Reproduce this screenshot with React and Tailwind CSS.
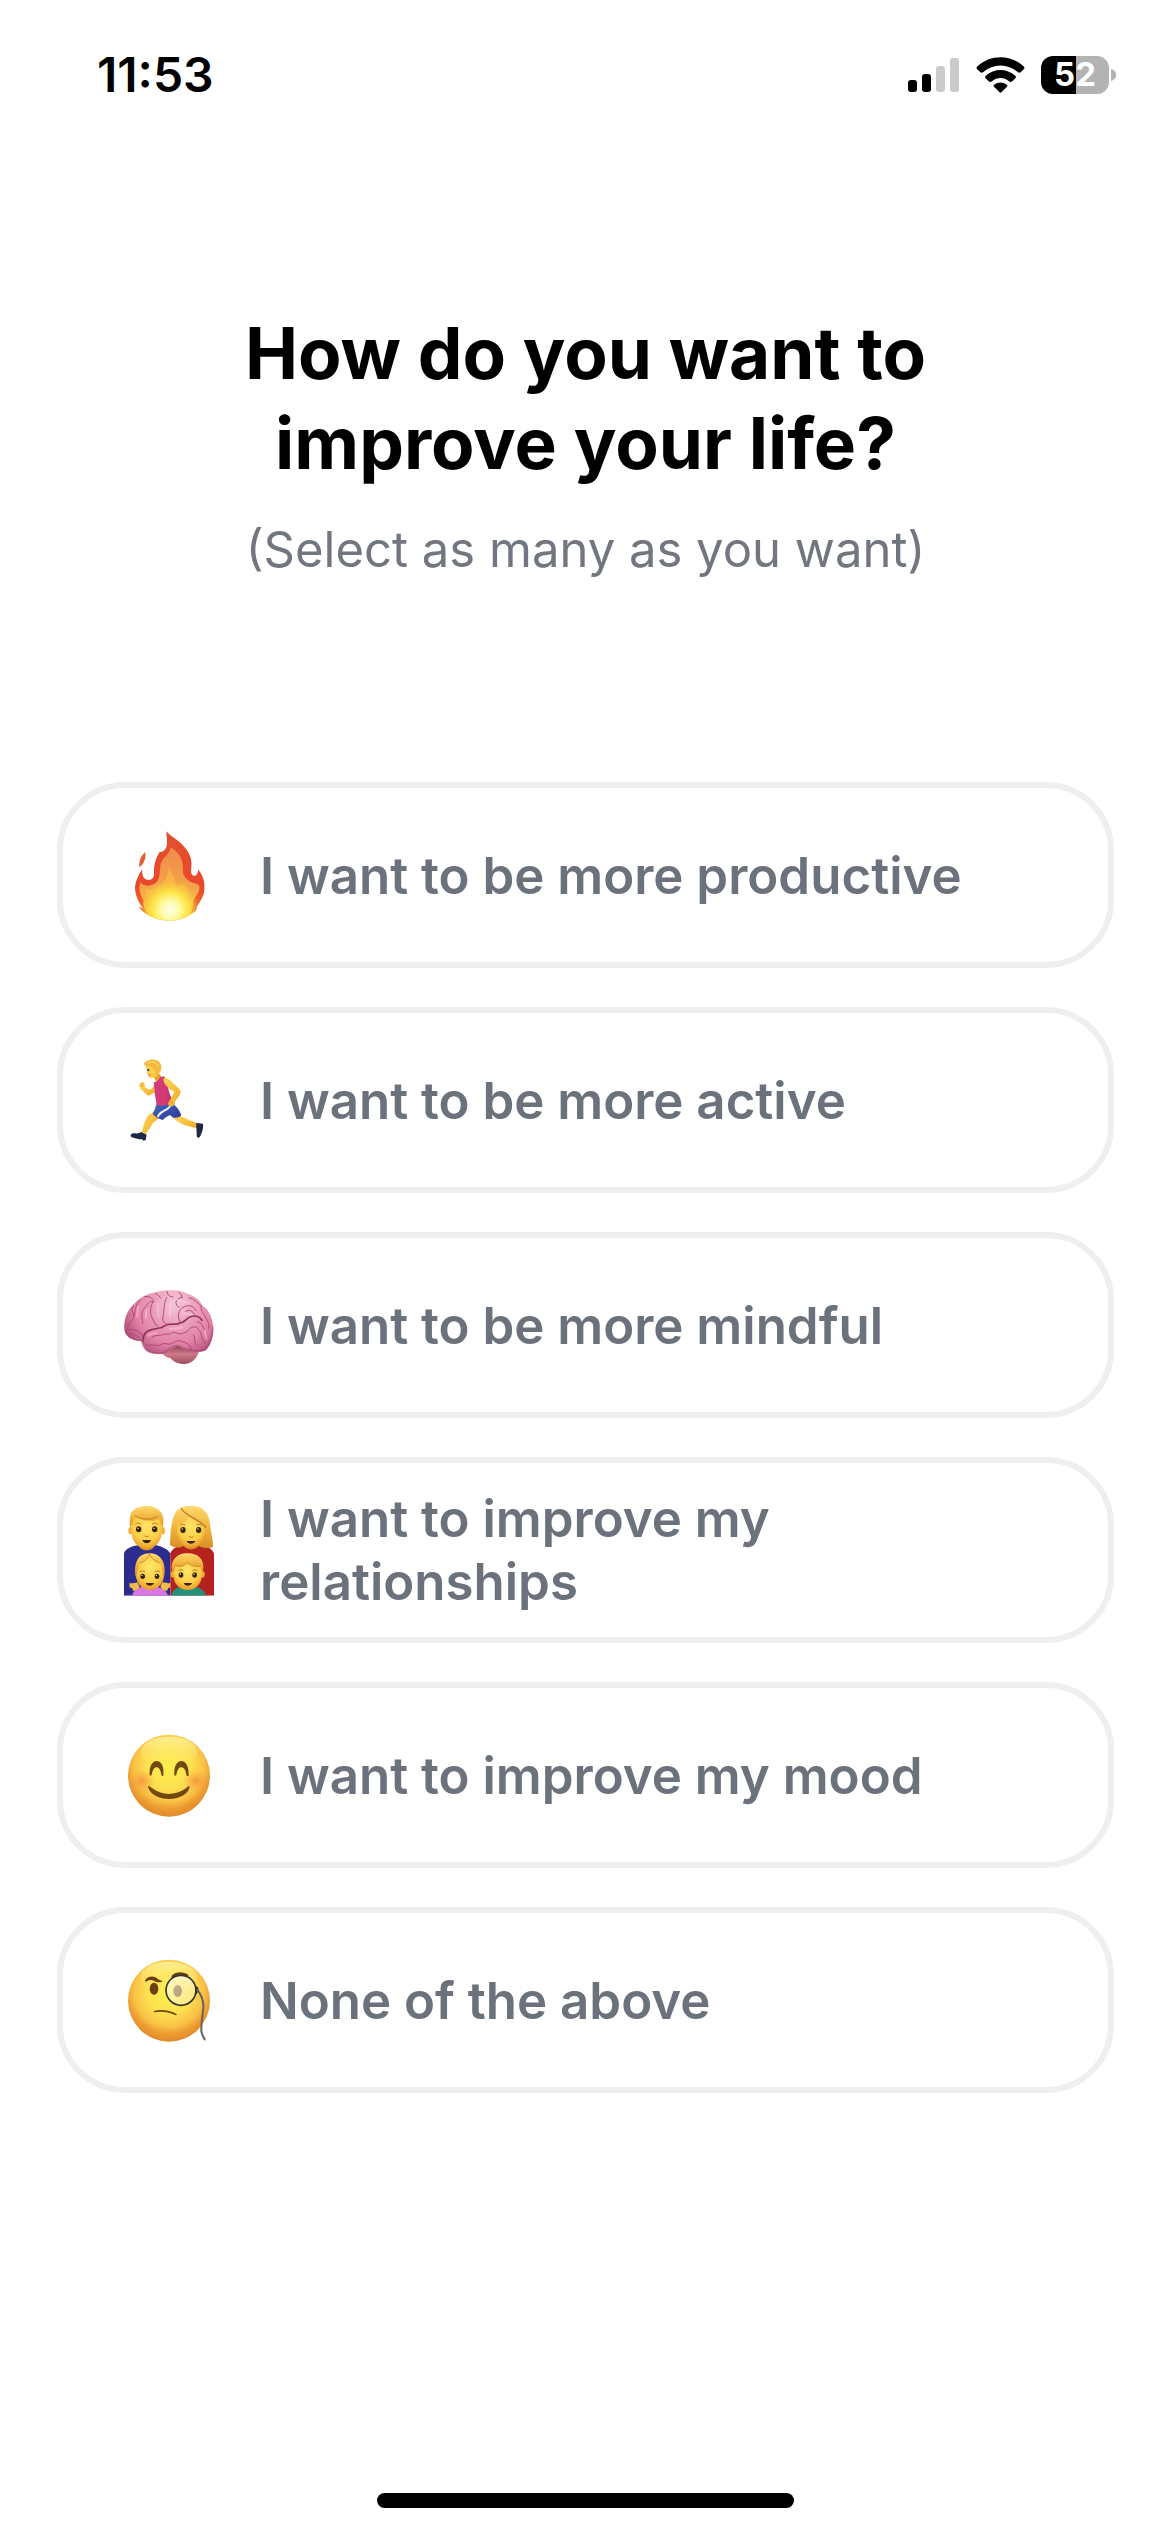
import React, { useState } from 'react';

const EMOJI_BOX = '42 42 276 276';

function FireIcon() {
  return (
    <svg viewBox={EMOJI_BOX} className="size-23 shrink-0" aria-hidden="true">
      <defs>
        <linearGradient id="fire-outer" x1="0" y1="0" x2="0" y2="1">
          <stop offset="0" stopColor="#e2502f" />
          <stop offset="0.6" stopColor="#e9492a" />
          <stop offset="0.85" stopColor="#ee6a2a" />
          <stop offset="1" stopColor="#f6a83a" />
        </linearGradient>
        <linearGradient id="fire-inner" x1="0" y1="0" x2="0" y2="1">
          <stop offset="0" stopColor="#f08a4c" />
          <stop offset="0.5" stopColor="#f3a24a" />
          <stop offset="1" stopColor="#f8cf3c" />
        </linearGradient>
        <radialGradient id="fire-core" gradientUnits="userSpaceOnUse" cx="180" cy="284" r="90">
          <stop offset="0" stopColor="#fffef0" />
          <stop offset="0.3" stopColor="#fffba8" />
          <stop offset="0.6" stopColor="#fdea48" stopOpacity="0.9" />
          <stop offset="1" stopColor="#f8c83c" stopOpacity="0" />
        </radialGradient>
        <clipPath id="fire-clip">
          <path d="M169 49C184 66 207 76 224 97C247 124 246 145 243 168C243 179 249 184 256 182C264 178 264 170 264 163C278 180 284 199 284 218C283 243 271 259 258 278L262 277L257 287C239 303 211 317 178 317C147 317 115 304 98 289L86 276L99 280C86 263 75 242 75 217C77 195 86 180 97 162C95 183 102 194 115 195C130 195 133 184 132 168C132 149 138 126 149 111C166 112 172 96 171 79C171 68 169 60 169 49Z" />
        </clipPath>
      </defs>
      <path d="M106 111C95 120 86 135 88 157C98 149 109 135 106 111Z" fill="#e85a35" />
      <g clipPath="url(#fire-clip)">
        <rect x="70" y="45" width="220" height="275" fill="url(#fire-outer)" />
        <path
          d="M182 97C201 107 219 130 219 157C216 178 226 190 237 198C250 207 262 203 268 213C271 238 249 247 250 261C253 274 242 285 236 317L124 317C112 292 96 275 101 257C91 239 84 218 92 202C97 211 112 216 130 208C151 199 149 176 151 152C154 129 178 122 182 97Z"
          fill="url(#fire-inner)"
        />
        <path
          d="M177 157C188 177 197 196 197 213C207 216 216 209 224 204C224 222 243 231 240 251C242 274 223 297 215 317L141 317C133 300 106 280 112 255C107 237 107 226 110 218C122 234 141 220 154 207C169 194 175 176 177 157Z"
          fill="#fbc23f"
          opacity="0.6"
        />
        <circle cx="180" cy="284" r="90" fill="url(#fire-core)" />
      </g>
    </svg>
  );
}

function RunnerIcon() {
  return (
    <svg viewBox={EMOJI_BOX} className="size-23 shrink-0" aria-hidden="true">
      <defs>
        <linearGradient id="run-skin" x1="0" y1="0" x2="1" y2="1">
          <stop offset="0" stopColor="#ffd95a" />
          <stop offset="1" stopColor="#f0a726" />
        </linearGradient>
        <linearGradient id="run-shirt" x1="0" y1="0" x2="1" y2="0">
          <stop offset="0" stopColor="#cf3d7d" />
          <stop offset="0.6" stopColor="#d23a73" />
          <stop offset="1" stopColor="#b92d63" />
        </linearGradient>
        <linearGradient id="run-shorts" x1="0" y1="0" x2="1" y2="1">
          <stop offset="0" stopColor="#4169b8" />
          <stop offset="1" stopColor="#2f3596" />
        </linearGradient>
      </defs>
      {/* legs */}
      <path d="M193 228C207 226 216 230 230 236C246 244 258 248 267 250L263 264C244 263 216 256 193 238Z" fill="url(#run-skin)" />
      <path d="M131 217L149 233C140 241 133 245 128 250C122 262 114 272 107 283L95 278C99 262 104 243 111 231C116 224 122 219 131 217Z" fill="url(#run-skin)" />
      <path d="M259 249L279 251C281 262 276 281 269 291C264 296 259 292 260 283C261 270 257 262 259 249Z" fill="#1e2947" />
      <path d="M93 276L110 284L107 300L101 302L96 298C85 298 71 294 63 290C60 284 64 280 73 280C82 281 88 280 93 276Z" fill="#1e2947" />
      {/* left arm */}
      <path d="M134 128C132 138 127 145 119 150L105 142L104 131C99 123 92 127 89 131C86 139 89 145 97 151C103 158 109 163 114 167C121 166 131 160 137 153Z" fill="url(#run-skin)" />
      <path d="M91 129L101 133M90 136L101 139" stroke="#d58a22" strokeWidth="2" fill="none" />
      {/* shorts */}
      <path d="M138 195L186 190C198 198 209 210 214 226C207 234 198 234 190 233L179 225C173 230 165 232 159 240C145 237 134 230 128 221C132 212 137 206 138 195Z" fill="url(#run-shorts)" />
      <path d="M179 194C176 207 151 207 140 229L145 233C155 213 180 213 184 195Z" fill="#edf0fa" />
      {/* neck, shirt */}
      <path d="M129 105L149 101L158 117L138 126Z" fill="#e9a72a" />
      <path d="M131 127C137 128 145 122 150 112L162 109C169 115 172 130 174 142C176 156 182 169 188 184C179 196 160 200 139 195C140 176 132 166 134 151Z" fill="url(#run-shirt)" />
      {/* right arm */}
      <path d="M162 113C173 113 181 120 192 132C202 141 211 149 212 154C212 164 202 176 195 184C196 195 189 202 180 199C172 195 174 186 180 180C187 170 190 161 192 155C183 150 170 142 165 132C161 125 159 118 162 113Z" fill="url(#run-skin)" />
      <path d="M178 187C184 184 187 188 188 193" stroke="#cf8520" strokeWidth="2" fill="none" />
      {/* head */}
      <path d="M109 76C121 72 137 74 145 83C151 93 145 104 137 110C131 114 121 116 116 112L115 105L109 98L112 93C108 87 107 81 109 76Z" fill="#ffcd4b" />
      <path d="M102 70C107 62 124 56 137 60C151 63 157 77 153 89C151 97 144 105 137 105C134 99 138 96 134 91C129 84 124 78 114 77C108 80 103 78 102 70Z" fill="#f2bb3e" />
      <path d="M110 70C122 62 139 65 146 78" stroke="#ffe27d" strokeWidth="3" fill="none" />
      <ellipse cx="115" cy="90" rx="3" ry="4" fill="#33405f" />
      <path d="M115 105C118 106 121 105 123 103" stroke="#9c5517" strokeWidth="2" fill="none" />
    </svg>
  );
}

function BrainIcon() {
  return (
    <svg viewBox={EMOJI_BOX} className="size-23 shrink-0" aria-hidden="true">
      <defs>
        <radialGradient id="brain-fill" gradientUnits="userSpaceOnUse" cx="195" cy="115" r="165">
          <stop offset="0" stopColor="#f5c6d8" />
          <stop offset="0.4" stopColor="#eb9fbb" />
          <stop offset="0.75" stopColor="#e181a5" />
          <stop offset="1" stopColor="#b95680" />
        </radialGradient>
        <linearGradient id="brain-stem" x1="0" y1="0" x2="0" y2="1">
          <stop offset="0" stopColor="#7e3049" />
          <stop offset="0.5" stopColor="#cf7a88" />
          <stop offset="1" stopColor="#9d4c62" />
        </linearGradient>
      </defs>
      <path d="M152 260C160 272 171 277 181 279C190 291 207 298 225 297C248 295 264 278 267 256L225 236L170 246Z" fill="url(#brain-stem)" />
      <path
        d="M43 193C41 169 49 139 69 120C86 100 105 88 130 83C161 74 205 72 232 86C255 92 270 106 276 121C293 131 306 153 309 181C313 207 305 237 289 254C277 264 254 260 240 255C226 259 215 250 205 244C187 245 177 263 160 266C138 269 113 264 104 249C98 240 97 232 94 228C75 227 59 222 51 211C46 205 44 199 43 193Z"
        fill="url(#brain-fill)"
      />
      <path
        d="M45 195C50 217 74 225 95 226C97 240 104 258 122 262C140 267 160 266 172 256C186 244 202 238 214 246C234 258 275 263 288 250C300 237 309 211 308 187"
        fill="none"
        stroke="#9c3f68"
        strokeWidth="5"
        opacity="0.45"
      />
      <g fill="none" stroke="#b04c78" strokeWidth="3" strokeLinecap="round" strokeLinejoin="round">
        <path
          d="M99 229C99 208 108 197 125 194C142 188 151 193 165 182C179 173 196 182 211 174C226 171 229 160 240 156C251 150 269 153 276 166"
          stroke="#8e3259"
          strokeWidth="5"
        />
        <path d="M49 190C62 199 76 190 92 204C98 209 98 216 97 229" />
        <path d="M71 121C58 140 78 146 68 164C59 172 60 179 49 190" />
        <path d="M92 104C78 118 76 129 73 151M99 174C91 149 97 137 107 125C116 112 119 108 132 110" />
        <path d="M130 109C120 125 119 143 126 158C132 174 141 183 148 190" />
        <path d="M170 98C159 118 164 139 159 154C156 170 164 178 174 178" />
        <path d="M216 96C191 105 195 120 207 127M209 169C201 151 206 135 219 127C231 120 252 119 257 136" />
        <path d="M227 139C240 129 255 144 253 151M237 99C251 99 260 112 274 123C270 136 280 142 286 156C292 168 299 175 296 190" />
        <path d="M104 95C118 92 123 99 131 105M137 86C145 90 149 94 152 99M171 79C172 89 177 95 189 96M207 82C213 87 215 91 216 98" />
        <path d="M126 217C137 208 149 214 158 209C174 205 176 211 189 202C201 202 208 211 222 203C232 204 236 191 246 187C261 182 267 194 273 204C273 216 279 227 287 238" />
        <path d="M105 237C117 246 123 235 139 242C154 242 157 232 173 237C186 241 191 228 207 227C224 231 240 235 244 255" />
        <path d="M283 194C276 183 277 170 262 171M251 210C257 219 250 228 260 240M57 203C68 210 77 208 88 218" />
      </g>
      <g fill="none" stroke="#fbdfe9" strokeWidth="6" strokeLinecap="round" opacity="0.4">
        <path d="M85 125C82 134 84 145 81 154M110 133C107 143 107 150 108 158M144 115C142 130 144 140 146 155M182 112C179 132 179 142 181 155M201 105C211 109 222 109 236 113M219 147C229 143 238 149 247 148" />
        <path d="M115 212C120 206 130 204 139 204M179 191C190 191 203 192 216 186M285 198C286 208 287 214 290 221" />
      </g>
    </svg>
  );
}

function FamilyIcon() {
  return (
    <svg viewBox={EMOJI_BOX} className="size-23 shrink-0" aria-hidden="true">
      <defs>
        <radialGradient id="fam-face" cx="0.5" cy="0.35" r="0.65">
          <stop offset="0" stopColor="#ffe566" />
          <stop offset="0.65" stopColor="#fdce48" />
          <stop offset="1" stopColor="#e79a26" />
        </radialGradient>
        <linearGradient id="fam-hair" x1="0" y1="0" x2="0" y2="1">
          <stop offset="0" stopColor="#ffd96b" />
          <stop offset="0.5" stopColor="#f1b540" />
          <stop offset="1" stopColor="#d98d22" />
        </linearGradient>
        <clipPath id="fam-clip">
          <rect x="42" y="42" width="270" height="275" />
        </clipPath>
      </defs>
      <g clipPath="url(#fam-clip)">
        {/* parents */}
        <path d="M42 190C47 175 66 168 86 165H135C157 169 173 178 181 190V317H42Z" fill="#2c2c8e" />
        <path d="M181 190C187 174 204 168 220 165H270C294 170 308 178 312 192V317H181Z" fill="#b5211f" />
        <path d="M90 158H130V174C119 184 101 184 90 174Z" fill="#d88b20" />
        <path d="M223 155H263V171C252 181 234 181 223 171Z" fill="#d88b20" />
        <ellipse cx="61" cy="122" rx="6" ry="11" fill="#f0b338" />
        <ellipse cx="159" cy="122" rx="6" ry="11" fill="#f0b338" />
        <path d="M64 95C63 70 156 70 156 95V123C156 151 137 177 110 177C83 177 64 151 64 123Z" fill="url(#fam-face)" />
        <path d="M61 113C55 82 62 55 89 52C104 45 135 47 147 61C163 73 161 93 158 113C154 104 155 93 147 86C130 96 96 94 78 81C67 90 67 103 61 113Z" fill="url(#fam-hair)" />
        <path d="M74 77C94 90 124 91 143 79" stroke="#c87d20" strokeWidth="3" fill="none" />
        <path d="M180 165C181 138 182 103 192 77C201 52 223 47 244 48C280 48 297 70 300 101C302 127 310 148 309 171C297 177 278 174 267 169L221 168C207 175 192 174 180 165Z" fill="url(#fam-hair)" />
        <path d="M201 104C222 103 233 91 237 75C246 91 264 94 284 109V128C282 151 266 173 243 173C219 173 201 151 201 126Z" fill="url(#fam-face)" />
        <path d="M213 54C228 82 263 82 288 113" fill="none" stroke="#c57b20" strokeWidth="4" />
        {/* children */}
        <path d="M66 317C72 296 91 288 119 288C146 288 169 298 174 317Z" fill="#d977e4" />
        <path d="M184 317C188 297 205 288 233 288C260 288 283 296 289 317Z" fill="#24917d" />
        <path d="M58 280C65 280 72 281 82 277L89 290C82 299 77 304 69 302L67 295L59 292Z" fill="#f1ba49" />
        <path d="M181 280C173 280 164 278 157 277L151 290C157 299 164 304 172 302L174 295L181 292Z" fill="#f1ba49" />
        <path d="M77 244C76 176 161 176 163 244C165 275 147 300 120 300C93 300 75 275 77 244Z" fill="url(#fam-face)" />
        <path d="M77 260C71 220 83 191 117 190C153 189 170 219 162 260C155 251 160 228 148 217C134 213 121 205 118 194C112 208 101 214 92 218C82 230 84 251 77 260Z" fill="url(#fam-hair)" />
        <path d="M118 191C115 207 101 215 90 219M119 191C123 207 138 213 149 219" fill="none" stroke="#cd8627" strokeWidth="3" />
        <ellipse cx="188" cy="253" rx="6" ry="10" fill="#edac37" />
        <ellipse cx="278" cy="253" rx="6" ry="10" fill="#edac37" />
        <path d="M190 239C189 202 276 202 276 239V254C276 281 257 300 233 300C209 300 190 281 190 254Z" fill="url(#fam-face)" />
        <path d="M187 246C179 213 199 190 232 190C270 189 287 216 278 247L271 231C255 231 242 228 232 220C224 231 206 232 197 228C193 237 192 243 187 246Z" fill="url(#fam-hair)" />
        <path d="M197 225C207 232 222 229 231 218C242 228 257 231 271 229" fill="none" stroke="#cb8126" strokeWidth="2" />
        {/* features */}
        <g fill="#38230c">
          <ellipse cx="86" cy="118" rx="8" ry="9" />
          <ellipse cx="134" cy="118" rx="8" ry="9" />
          <ellipse cx="219" cy="120" rx="8" ry="9" />
          <ellipse cx="266" cy="120" rx="8" ry="9" />
          <ellipse cx="98" cy="259" rx="7" ry="8" />
          <ellipse cx="141" cy="259" rx="7" ry="8" />
          <ellipse cx="213" cy="255" rx="7" ry="8" />
          <ellipse cx="254" cy="255" rx="7" ry="8" />
          <path d="M97 150H123C119 163 101 163 97 150Z" />
          <path d="M230 153H256C252 164 234 164 230 153Z" />
          <path d="M107 279H132C128 290 111 290 107 279Z" />
          <path d="M221 279H246C242 290 225 290 221 279Z" />
        </g>
        <g fill="#ffffff">
          <circle cx="84" cy="115" r="2" />
          <circle cx="132" cy="115" r="2" />
          <circle cx="217" cy="117" r="2" />
          <circle cx="264" cy="117" r="2" />
          <circle cx="96" cy="256" r="2" />
          <circle cx="139" cy="256" r="2" />
          <circle cx="211" cy="252" r="2" />
          <circle cx="252" cy="252" r="2" />
        </g>
        <g fill="none" stroke="#bd7a20" strokeWidth="3" strokeLinecap="round">
          <path d="M77 103C81 98 88 98 93 102M127 102C132 98 140 98 144 103" />
          <path d="M210 106C214 102 221 102 225 105M260 105C264 102 271 102 275 106" />
          <path d="M104 138C108 141 113 141 116 138M238 140C242 143 246 143 249 140" />
          <path d="M90 245C95 242 100 242 104 245M135 245C140 242 145 242 149 245M206 241C211 238 216 239 219 241M248 241C253 238 258 239 262 242" />
        </g>
      </g>
    </svg>
  );
}

function FaceBase({ id }) {
  return (
    <>
      <defs>
        <radialGradient id={id} gradientUnits="userSpaceOnUse" cx="177" cy="155" r="150">
          <stop offset="0" stopColor="#fff04e" />
          <stop offset="0.45" stopColor="#fde050" />
          <stop offset="0.7" stopColor="#f9c246" />
          <stop offset="0.85" stopColor="#ec9a30" />
          <stop offset="1" stopColor="#df8a2a" />
        </radialGradient>
        <linearGradient id={`${id}-shine`} x1="0" y1="0" x2="0" y2="1">
          <stop offset="0" stopColor="#fff3a0" stopOpacity="0.85" />
          <stop offset="1" stopColor="#ffe95b" stopOpacity="0" />
        </linearGradient>
      </defs>
      <circle cx="177" cy="182" r="123" fill={`url(#${id})`} />
      <ellipse cx="177" cy="112" rx="85" ry="47" fill={`url(#${id}-shine)`} />
    </>
  );
}

function SmileIcon() {
  return (
    <svg viewBox={EMOJI_BOX} className="size-23 shrink-0" aria-hidden="true">
      <defs>
        <radialGradient id="smile-blush">
          <stop offset="0" stopColor="#f4793a" stopOpacity="0.6" />
          <stop offset="1" stopColor="#f58a3e" stopOpacity="0" />
        </radialGradient>
      </defs>
      <FaceBase id="smile-face" />
      <ellipse cx="97" cy="197" rx="40" ry="33" fill="url(#smile-blush)" />
      <ellipse cx="257" cy="197" rx="40" ry="33" fill="url(#smile-blush)" />
      <path d="M119 180C117 154 127 138 140 138C154 138 163 155 160 182C158 184 155 183 154 179C152 166 147 157 140 157C132 157 128 165 125 179C123 183 120 183 119 180Z" fill="#73480f" />
      <path d="M193 180C191 154 201 138 214 138C228 138 237 155 236 182C233 184 230 183 229 179C227 166 222 157 214 157C206 157 202 165 199 179C197 183 194 183 193 180Z" fill="#73480f" />
      <path d="M114 214C117 211 120 216 127 220C157 243 197 242 228 220C234 215 237 211 239 215C237 234 211 252 177 252C142 252 116 234 114 214Z" fill="#73480f" />
    </svg>
  );
}

function MonocleIcon() {
  return (
    <svg viewBox={EMOJI_BOX} className="size-23 shrink-0" aria-hidden="true">
      <defs>
        <linearGradient id="monocle-lens" x1="0" y1="0" x2="1" y2="1">
          <stop offset="0" stopColor="#ffffff" stopOpacity="0.65" />
          <stop offset="1" stopColor="#fff7cf" stopOpacity="0.35" />
        </linearGradient>
      </defs>
      <FaceBase id="monocle-face" />
      <path d="M106 121C112 108 132 106 143 117C148 120 153 122 158 123C150 130 140 127 132 122C123 118 116 120 108 125C105 125 105 123 106 121Z" fill="#6d3e10" />
      <path d="M185 107C197 95 217 94 233 103C237 107 236 111 230 110C214 104 201 108 188 113C184 113 183 110 185 107Z" fill="#6d3e10" />
      <ellipse cx="132" cy="146" rx="13" ry="18" fill="#6d3e10" />
      <ellipse cx="203" cy="153" rx="13" ry="18" fill="#7d4d16" />
      <circle cx="213" cy="151" r="45" fill="url(#monocle-lens)" stroke="#35352f" strokeWidth="5" />
      <path d="M178 133C188 112 220 106 240 127" fill="none" stroke="#ffffff" strokeWidth="5" opacity="0.4" />
      <path d="M132 213C153 207 180 211 200 222C201 225 198 226 195 225C175 217 154 213 136 217C132 217 130 215 132 213Z" fill="#744511" />
      <path d="M256 139C262 138 266 145 266 151C264 158 260 163 256 163Z" fill="#292929" />
      <path d="M262 150C280 171 282 194 279 214C276 240 273 259 274 273C276 286 280 292 284 298" fill="none" stroke="#67645b" strokeWidth="6" strokeLinecap="round" />
    </svg>
  );
}

const options = [
  { id: 'productive', label: 'I want to be more productive', icon: FireIcon },
  { id: 'active', label: 'I want to be more active', icon: RunnerIcon },
  { id: 'mindful', label: 'I want to be more mindful', icon: BrainIcon },
  { id: 'relationships', label: 'I want to improve my relationships', icon: FamilyIcon },
  { id: 'mood', label: 'I want to improve my mood', icon: SmileIcon },
  { id: 'none', label: 'None of the above', icon: MonocleIcon },
];

function StatusBar() {
  return (
    <header className="flex h-[149px] items-center justify-between pr-[54px] pl-[97px]">
      <time className="text-[48px] leading-none font-semibold">11:53</time>
      <div className="flex items-center">
        <svg viewBox="0 0 51 36" className="mr-[17px] h-9 w-[51px]" role="img" aria-label="Signal: 2 of 4 bars">
          <rect x="0" y="23" width="9" height="12" rx="3" fill="#000" />
          <rect x="14" y="17" width="9" height="18" rx="3" fill="#000" />
          <rect x="28" y="9" width="9" height="26" rx="3" fill="#cbcbcb" />
          <rect x="42" y="1" width="9" height="34" rx="3" fill="#cbcbcb" />
        </svg>
        <svg viewBox="254 44 146 109" className="mr-4 h-9 w-[49px]" role="img" aria-label="Wi-Fi">
          <path d="M256 73C297 35 357 35 398 73Q401 77 398 80L388 90Q384 93 380 90C349 63 305 63 274 90Q270 93 266 90L256 80Q253 77 256 73Z" />
          <path d="M282 101C309 77 345 77 372 101Q376 105 372 108L362 118Q358 121 354 118C337 104 317 104 300 118Q296 121 292 118L282 108Q278 105 282 101Z" />
          <path d="M308 128C320 119 334 119 346 128Q350 131 346 135L330 151Q327 154 324 151L308 135Q304 131 308 128Z" />
        </svg>
        <div className="flex h-[38px] w-[68px] items-center justify-center rounded-[12px] bg-linear-to-r from-black from-51% to-[#b3b3b3] to-51% text-[33px] leading-none font-bold text-white">
          52
        </div>
        <svg viewBox="0 0 5 12" className="ml-[2px] h-3 w-[5px]" aria-hidden="true">
          <path d="M0 0C7 2 7 10 0 12Z" fill="#b3b3b3" />
        </svg>
      </div>
    </header>
  );
}

function OptionButton({ label, icon: Icon, selected, onClick }) {
  return (
    <button
      type="button"
      aria-pressed={selected}
      onClick={onClick}
      className="flex min-h-[186px] w-full items-center gap-11 rounded-[68px] border-6 border-[#efefef] bg-white pr-[120px] pl-[61px] text-left text-[51px] leading-[63px] font-semibold text-[#6c727b] aria-pressed:border-gray-500"
    >
      <Icon />
      <span>{label}</span>
    </button>
  );
}

export default function App() {
  const [selected, setSelected] = useState([]);

  const toggle = (id) => {
    setSelected((prev) => (prev.includes(id) ? prev.filter((x) => x !== id) : [...prev, id]));
  };

  return (
    <div className="flex min-h-screen flex-col bg-white font-['Inter',sans-serif] text-black">
      <StatusBar />
      <main className="flex flex-col pr-14 pl-[57px]">
        <div className="mx-auto mt-[159px] max-w-[760px] text-center">
          <h1 className="text-[71px] leading-[90px] font-bold">How do you want to improve your life?</h1>
          <p className="mt-[30px] text-[49px] leading-[63px] text-[#71767f]">(Select as many as you want)</p>
        </div>
        <div className="mt-[201px] flex flex-col gap-[39px]">
          {options.map((option) => (
            <OptionButton
              key={option.id}
              label={option.label}
              icon={option.icon}
              selected={selected.includes(option.id)}
              onClick={() => toggle(option.id)}
            />
          ))}
        </div>
      </main>
      <div className="mx-auto mt-auto mb-6 h-[15px] w-[417px] rounded-full bg-black" />
    </div>
  );
}
